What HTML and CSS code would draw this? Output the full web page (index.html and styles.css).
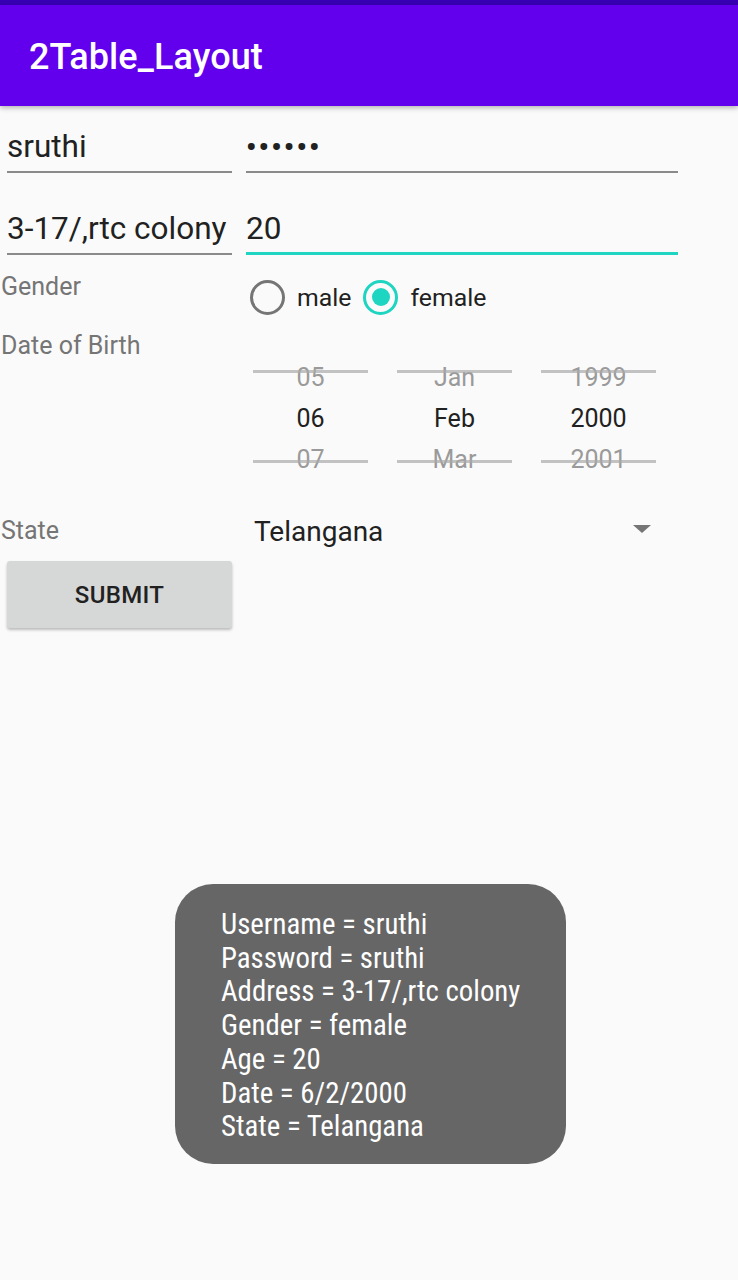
FILE: index.html
```html
<!DOCTYPE html>
<html>
<head>
<meta charset="utf-8">
<link rel="stylesheet" href="styles.css">
</head>
<body>
<div class="status"></div>
<header class="appbar"><span class="title">2Table_Layout</span></header>
<main class="table">
  <div class="row row-edit1">
    <div class="cell c1"><div class="field">sruthi</div></div>
    <div class="cell c2"><div class="field wide pass">••••••</div></div>
  </div>
  <div class="row row-edit2">
    <div class="cell c1"><div class="field">3-17/,rtc colony</div></div>
    <div class="cell c2"><div class="field wide focused">20</div></div>
  </div>
  <div class="row row-gender">
    <div class="cell c1"><span class="label">Gender</span></div>
    <div class="cell c2 radios">
      <span class="radio"><span class="ring"></span><span class="rtext">male</span></span>
      <span class="radio checked"><span class="ring"><span class="dot"></span></span><span class="rtext">female</span></span>
    </div>
  </div>
  <div class="row row-dob">
    <div class="cell c1"><span class="label">Date of Birth</span></div>
    <div class="cell c2 picker">
      <div class="pcol"><div class="item faded">05</div><div class="item sel">06</div><div class="item faded">07</div></div>
      <div class="pcol"><div class="item faded">Jan</div><div class="item sel">Feb</div><div class="item faded">Mar</div></div>
      <div class="pcol"><div class="item faded">1999</div><div class="item sel">2000</div><div class="item faded">2001</div></div>
    </div>
  </div>
  <div class="row row-state">
    <div class="cell c1"><span class="label">State</span></div>
    <div class="cell c2 spinner"><span class="spin-text">Telangana</span><span class="arrow"></span></div>
  </div>
  <div class="row row-btn">
    <div class="cell c1"><button class="submit">SUBMIT</button></div>
  </div>
</main>
<div class="toast">
  <div>Username = sruthi</div>
  <div>Password = sruthi</div>
  <div>Address = 3-17/,rtc colony</div>
  <div>Gender = female</div>
  <div>Age = 20</div>
  <div>Date = 6/2/2000</div>
  <div>State = Telangana</div>
</div>
</body>
</html>
```
FILE: styles.css
```css
* { box-sizing: border-box; }
html, body { margin: 0; padding: 0; }
body {
  width: 738px;
  height: 1280px;
  background: #fafafa;
  font-family: Roboto, "Liberation Sans", sans-serif;
  color: #212121;
  position: relative;
  overflow: hidden;
}
.status { height: 5px; background: #3700b3; }
.appbar {
  height: 101px;
  background: #6200ee;
  display: flex;
  align-items: center;
  padding-left: 29px;
  padding-top: 3px;
  box-shadow: 0 2px 5px rgba(0,0,0,0.28);
  position: relative;
  z-index: 1;
}
.title { color: #fff; font-size: 36px; font-weight: 500; letter-spacing: 0.1px; }

.table { display: flex; flex-direction: column; }
.row { display: flex; }
.c1 { width: 246px; flex: none; }
.c2 { width: 432px; flex: none; }

.field {
  margin-left: 7px;
  width: 225px;
  font-size: 31.5px;
  line-height: 36px;
  height: 44px;
  padding-bottom: 6px;
  border-bottom: 2px solid #8a8a8a;
  white-space: nowrap;
  overflow: hidden;
}
.field.wide { margin-left: 0; width: 432px; }
.field.pass { letter-spacing: 2.2px; font-size: 29px; font-weight: 700; }
.field.focused { border-bottom: 3px solid #1dd5c1; padding-bottom: 5px; }
.row-edit1 { padding-top: 23px; }
.row-edit2 { padding-top: 38px; }

.label { font-size: 25px; line-height: 30px; color: #757575; display: block; padding-left: 1px; }
.row-gender { padding-top: 17px; height: 75px; }
.radios { display: flex; align-items: center; gap: 11px; height: 50px; padding-left: 4px; }
.radio { display: flex; align-items: center; gap: 12px; font-size: 24.8px; color: #212121; }
.ring {
  width: 35px; height: 35px; border-radius: 50%;
  border: 3.5px solid #757575;
  display: flex; align-items: center; justify-content: center;
}
.checked .ring { border-color: #1dd5c1; margin-left: 1px; }
.dot { width: 18px; height: 18px; border-radius: 50%; background: #1dd5c1; }

.row-dob { padding-top: 1px; }
.picker { display: flex; gap: 29px; padding-left: 7px; padding-top: 26px; }
.pcol { width: 115px; position: relative; }
.pcol::before, .pcol::after {
  content: ""; position: absolute; left: 0; right: 0; height: 3px; background: rgba(170,170,170,0.7);
}
.pcol::before { top: 13px; }
.pcol::after { top: 103px; }
.item { height: 41px; line-height: 41px; text-align: center; font-size: 25px; }
.item.faded { color: #9a9a9a; }
.item.sel { color: #212121; }

.row-state { padding-top: 36px; }
.spinner { display: flex; align-items: center; height: 30px; padding-left: 8px; }
.spin-text { font-size: 28px; color: #212121; }
.arrow {
  margin-left: auto; margin-right: 27px;
  width: 0; height: 0;
  border-left: 9px solid transparent; border-right: 9px solid transparent;
  border-top: 8px solid #757575;
  margin-top: -5px;
}

.row-btn { padding-top: 15px; }
.submit {
  margin-left: 7px;
  width: 225px; height: 67px;
  background: #d6d7d7;
  border: none; border-radius: 3px;
  box-shadow: 0 2px 3px rgba(0,0,0,0.25);
  font-family: Roboto, "Liberation Sans", sans-serif;
  font-size: 24px; font-weight: 500; color: #212121;
  letter-spacing: 0.3px;
  padding: 0;
}

.toast {
  position: absolute;
  left: 175px; top: 884px;
  width: 391px; height: 280px;
  background: #666666;
  border-radius: 38px;
  padding: 24px 0 0 46px;
  color: #fff;
  font-family: "Roboto Condensed", "Liberation Sans Narrow", Roboto, sans-serif;
  font-stretch: condensed;
  font-size: 28.8px;
  line-height: 33.7px;
}
```
